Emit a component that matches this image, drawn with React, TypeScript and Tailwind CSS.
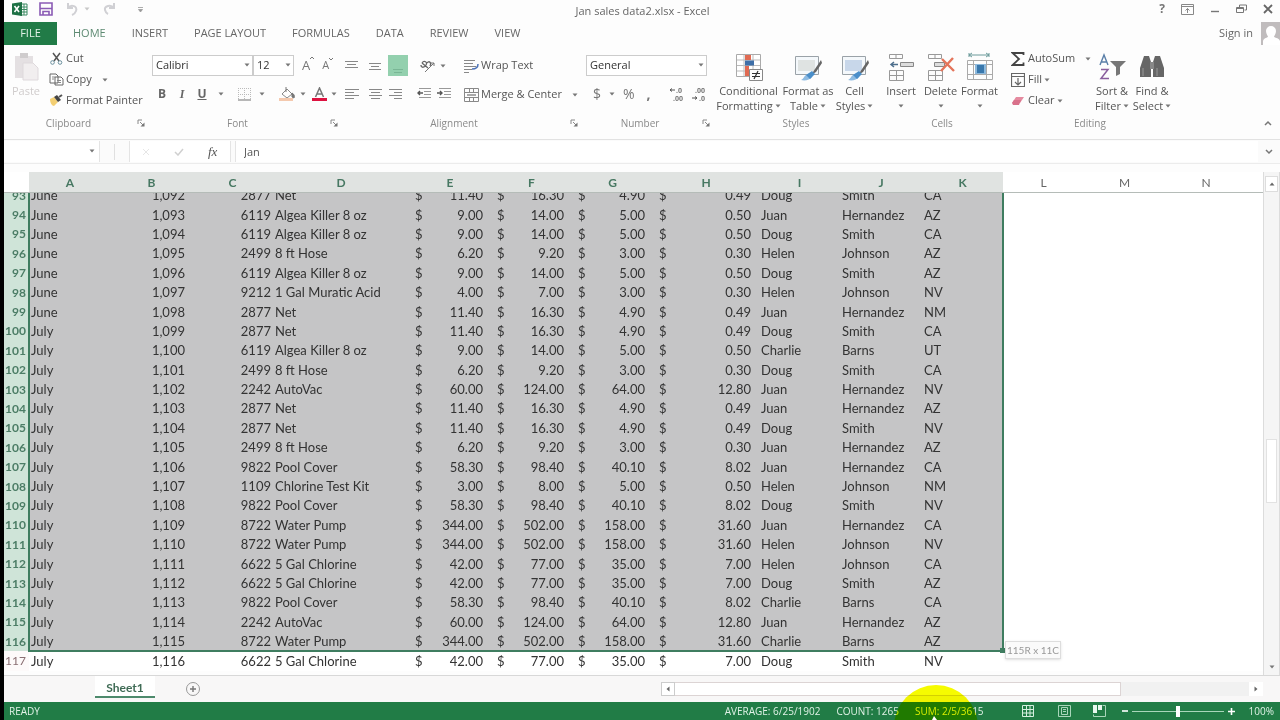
import React from "react";

type IconProps = { w: number; h: number; children: React.ReactNode };

const Icon = ({ w, h, children }: IconProps) => (
  <svg width={w} height={h} viewBox={`0 0 ${w} ${h}`} fill="none" className="shrink-0" aria-hidden="true">
    {children}
  </svg>
);

const Caret = () => (
  <Icon w={6} h={4}>
    <path d="M0.5 0.5h5L3 3.5z" fill="#777" />
  </Icon>
);

const Launcher = () => (
  <Icon w={8} h={8}>
    <path d="M1 5V1h4M3 3l3 3" stroke="#888" />
    <path d="M7.5 3.5v4h-4z" fill="#777" />
  </Icon>
);

type GroupProps = { label: string; width: string; launcher?: boolean; children: React.ReactNode };

const Group = ({ label, width, launcher, children }: GroupProps) => (
  <section aria-label={label} className={`flex shrink-0 flex-col ${width}`}>
    <div className="flex h-[67px] items-start">{children}</div>
    <div className="flex h-4 items-center px-1">
      <span className={`flex-1 text-center text-[10px] leading-4 text-[#8a8a8a] ${launcher ? "pr-2" : ""}`}>{label}</span>
      {launcher && (
        <button aria-label={`${label} settings`}>
          <Launcher />
        </button>
      )}
    </div>
  </section>
);

type SmallProps = { icon: React.ReactNode; label: string; caret?: boolean; wide?: boolean };

const SmallButton = ({ icon, label, caret, wide }: SmallProps) => (
  <button className="flex h-[21px] items-center gap-[2px] whitespace-nowrap text-[11px] text-[#555]">
    <span className="flex w-4 justify-center">{icon}</span>
    <span>{label}</span>
    {caret && (
      <span className={wide ? "ml-2" : ""}>
        <Caret />
      </span>
    )}
  </button>
);

type BigProps = { icon: React.ReactNode; lines: [string, string]; width: string };

const BigButton = ({ icon, lines, width }: BigProps) => (
  <button className={`flex flex-col items-center pt-[3px] text-[11px] leading-[15px] whitespace-nowrap text-[#555] ${width}`}>
    <span className="flex h-8 items-center">{icon}</span>
    <span>{lines[0]}</span>
    <span className="flex h-[15px] items-center gap-[2px]">
      {lines[1]}
      <Caret />
    </span>
  </button>
);

const Align = ({ rows, y, step }: { rows: [number, number][]; y: number; step: number }) => (
  <Icon w={16} h={16}>
    {rows.map(([a, b], i) => (
      <path key={i} d={`M${a} ${y + i * step + 0.5}H${b}`} stroke="#888" />
    ))}
  </Icon>
);

const Indent = ({ flip }: { flip?: boolean }) => (
  <Icon w={16} h={14}>
    <path d="M3 1.5h12M8 4.5h7M8 7.5h7M3 10.5h12" stroke="#999" />
    <path d={flip ? "M1 6h5M4 4l2 2-2 2" : "M7 6H2M4 4L2 6l2 2"} stroke="#555" strokeWidth="1.4" />
  </Icon>
);

const Decimal = ({ top, bottom, flip }: { top: string; bottom: string; flip?: boolean }) => (
  <svg width="16" height="16" viewBox="0 0 16 16" aria-hidden="true" className="font-['Open_Sans',sans-serif]">
    <text x={flip ? 4 : 7} y="7" fontSize="7" fontWeight="700" fill="#777">{top}</text>
    <text x={flip ? 8 : 4} y="15" fontSize="7" fontWeight="700" fill="#777">{bottom}</text>
    <path d={flip ? "M1 12h5M4 10.5l2 1.5-2 1.5" : "M6 4H1M3 2.5L1 4l2 1.5"} stroke="#555" fill="none" />
  </svg>
);

const TableBrush = ({ inner }: { inner: string }) => (
  <Icon w={30} h={30}>
    <path d="M2.5 4.5h23v18h-23z" fill="#f4f8fb" stroke="#9aa2a8" />
    <path d="M5 8h17v11H5z" fill={inner} />
    <path d="M28 8l-6 9-4 6 5-3 6-9z" fill="#666" />
    <path d="M8 28c3-1 3-5 7-6 3-1 5 1 4 3-2 3-7 4-11 3z" fill="#8dbbe2" />
    <path d="M13 23l4 4 5-5-3-3z" fill="#4a8ec9" />
  </Icon>
);

const menuTabs = ["HOME", "INSERT", "PAGE LAYOUT", "FORMULAS", "DATA", "REVIEW", "VIEW"];

const colWidths = [
  "w-[25px]", "w-[82px]", "w-[81px]", "w-[81px]", "w-[136px]", "w-[82px]", "w-[81px]", "w-[81px]",
  "w-[106px]", "w-[81px]", "w-[82px]", "w-[81px]", "w-[81px]", "w-[81px]", "w-[82px]", "",
];
const letters = ["A", "B", "C", "D", "E", "F", "G", "H", "I", "J", "K", "L", "M", "N"];

type Item = { code: string; name: string; cost: string; price: string; margin: string; fee: string };

const items: Record<string, Item> = {
  net: { code: "2877", name: "Net", cost: "11.40", price: "16.30", margin: "4.90", fee: "0.49" },
  algea: { code: "6119", name: "Algea Killer 8 oz", cost: "9.00", price: "14.00", margin: "5.00", fee: "0.50" },
  hose: { code: "2499", name: "8 ft Hose", cost: "6.20", price: "9.20", margin: "3.00", fee: "0.30" },
  acid: { code: "9212", name: "1 Gal Muratic Acid", cost: "4.00", price: "7.00", margin: "3.00", fee: "0.30" },
  vac: { code: "2242", name: "AutoVac", cost: "60.00", price: "124.00", margin: "64.00", fee: "12.80" },
  cover: { code: "9822", name: "Pool Cover", cost: "58.30", price: "98.40", margin: "40.10", fee: "8.02" },
  kit: { code: "1109", name: "Chlorine Test Kit", cost: "3.00", price: "8.00", margin: "5.00", fee: "0.50" },
  pump: { code: "8722", name: "Water Pump", cost: "344.00", price: "502.00", margin: "158.00", fee: "31.60" },
  chlorine: { code: "6622", name: "5 Gal Chlorine", cost: "42.00", price: "77.00", margin: "35.00", fee: "7.00" },
};

const surnames: Record<string, string> = {
  Doug: "Smith", Juan: "Hernandez", Helen: "Johnson", Charlie: "Barns",
};

const sales: [string, string, string][] = [
  ["net", "Doug", "CA"], ["algea", "Juan", "AZ"], ["algea", "Doug", "CA"], ["hose", "Helen", "AZ"],
  ["algea", "Doug", "AZ"], ["acid", "Helen", "NV"], ["net", "Juan", "NM"], ["net", "Doug", "CA"],
  ["algea", "Charlie", "UT"], ["hose", "Doug", "CA"], ["vac", "Juan", "NV"], ["net", "Juan", "AZ"],
  ["net", "Doug", "NV"], ["hose", "Juan", "AZ"], ["cover", "Juan", "CA"], ["kit", "Helen", "NM"],
  ["cover", "Doug", "NV"], ["pump", "Juan", "CA"], ["pump", "Helen", "NV"], ["chlorine", "Helen", "CA"],
  ["chlorine", "Doug", "AZ"], ["cover", "Charlie", "CA"], ["vac", "Juan", "AZ"], ["pump", "Charlie", "AZ"],
  ["chlorine", "Doug", "NV"],
];

const firstRow = 93;
const lastSelected = 116;

const Columns = () => (
  <colgroup>
    {colWidths.map((w, i) => (
      <col key={i} className={w} />
    ))}
  </colgroup>
);

const Money = ({ value }: { value: string }) => (
  <td className="pr-2 pl-[6px]">
    <div className="flex justify-between">
      <span>$</span>
      <span>{value}</span>
    </div>
  </td>
);

const SheetRow = ({ index }: { index: number }) => {
  const [key, first, state] = sales[index];
  const item = items[key];
  const num = firstRow + index;
  const selected = num <= lastSelected;
  return (
    <tr className={selected ? "bg-[#c5c5c6]" : "bg-white"}>
      <th
        scope="row"
        className={`pr-[3px] text-right text-xs ${
          selected ? "bg-[#cfe4d8] font-bold text-[#4c7d66]" : "bg-[#fdfafa] font-normal text-[#8a6f73]"
        }`}
      >
        {num}
      </th>
      <td className="pl-[2px]">{num < 100 ? "June" : "July"}</td>
      <td className="pr-[7px] text-right">{`1,${String(num + 999).slice(1)}`}</td>
      <td className="pr-[2px] text-right">{item.code}</td>
      <td className="pl-[2px]">{item.name}</td>
      <Money value={item.cost} />
      <Money value={item.price} />
      <Money value={item.margin} />
      <Money value={item.fee} />
      <td className="pl-[2px]">{first}</td>
      <td className="pl-[2px]">{surnames[first]}</td>
      <td className="pl-[2px]">{state}</td>
      <td colSpan={4} className="bg-white" />
    </tr>
  );
};

const TitleBar = () => (
  <header className="flex h-[22px] shrink-0 items-center justify-between">
    <div className="flex flex-1 items-center pb-1 pl-2">
      <Icon w={16} h={16}>
        <path d="M8 3h7v11H8z" fill="#fff" stroke="#3a8a62" />
        <path d="M9 6h6M9 8.5h6M9 11h6M12 3v11" stroke="#3a8a62" />
        <path d="M0 2.500L10 1v14L0 13.500z" fill="#1e7145" />
        <path d="M2.500 5l4.500 6M7 5l-4.500 6" stroke="#fff" strokeWidth="1.6" />
      </Icon>
      <button aria-label="Save" className="ml-[11px]">
        <Icon w={14} h={14}>
          <path d="M1 1h12v12H1z" stroke="#8a5bb5" strokeWidth="1.6" />
          <path d="M1 6.5h12M4 13V9.5h6V13" stroke="#8a5bb5" strokeWidth="1.6" />
        </Icon>
      </button>
      <button aria-label="Undo" className="ml-[13px]">
        <Icon w={14} h={14}>
          <path d="M2 1v5h5M2 6c3-4 10-2 8 3-.5 1.500-1.500 3-4 4" stroke="#d0d0d4" strokeWidth="2" />
        </Icon>
      </button>
      <span className="ml-1 opacity-40"><Caret /></span>
      <button aria-label="Redo" className="ml-3">
        <Icon w={14} h={14}>
          <path d="M12 1v5H7M12 6C9 2 2 4 3 8c.5 2 1 3 3 4" stroke="#d0d0d4" strokeWidth="2" />
        </Icon>
      </button>
      <button aria-label="Customize toolbar" className="ml-[21px]">
        <Icon w={7} h={7}>
          <path d="M1 1.500h5M1.500 3.500h4L3.500 6z" stroke="#999" fill="#999" strokeWidth=".8" />
        </Icon>
      </button>
    </div>
    <h1 className="text-[11px] text-[#666]">Jan sales data2.xlsx - Excel</h1>
    <div className="flex flex-1 items-center justify-end gap-4 pr-[7px] pb-1">
      <button aria-label="Help" className="text-xs font-bold text-[#777]">?</button>
      <button aria-label="Ribbon display options">
        <Icon w={13} h={11}>
          <path d="M.5.5h12v10H.5zM.5 2.5h12M6.500 9V4.500M4.500 6.500l2-2 2 2" stroke="#888" />
        </Icon>
      </button>
      <button aria-label="Minimize">
        <Icon w={10} h={10}>
          <path d="M1 7.500h8" stroke="#777" strokeWidth="1.4" />
        </Icon>
      </button>
      <button aria-label="Restore">
        <Icon w={11} h={10}>
          <path d="M3.500 3V1h7v5h-2M.5 3.500h7v5h-7zM.5 4.500h7" stroke="#777" />
        </Icon>
      </button>
      <button aria-label="Close">
        <Icon w={10} h={10}>
          <path d="M1 1l8 8M9 1L1 9" stroke="#666" strokeWidth="1.8" />
        </Icon>
      </button>
    </div>
  </header>
);

const MenuBar = () => (
  <nav className="flex h-[23px] shrink-0 items-center text-[11px] text-[#666]">
    <button className="h-[23px] w-[53px] bg-[#217b47] text-[#e3f2e8]">FILE</button>
    <div className="flex flex-1 gap-[26px] pl-4 whitespace-nowrap">
      {menuTabs.map((t) => (
        <button key={t} className={t === "HOME" ? "text-[#5d8a72]" : ""}>{t}</button>
      ))}
    </div>
    <a href="#signin">Sign in</a>
    <span className="ml-2">
      <Icon w={19} h={23}>
        <path d="M0 0h19v23H0z" fill="#c0bcbd" />
        <path d="M5 9a5 5 0 0110 0c0 3-2 5-2 6 2 1 5 1 6 4v4H2v-4c1-3 3-3 5-4 0-1-2-3-2-6z" fill="#fff" />
      </Icon>
    </span>
  </nav>
);

const boxClass = "h-[21px] appearance-none border border-[#ccc] bg-white pl-[3px] text-[11px] text-[#333]";

const Box = ({ label, value, width }: { label: string; value: string; width: string }) => (
  <span className="relative flex">
    <select aria-label={label} className={`${boxClass} ${width}`}>
      <option>{value}</option>
    </select>
    <span className="pointer-events-none absolute top-2 right-[3px]"><Caret /></span>
  </span>
);

const Ribbon = () => (
  <div className="flex h-[95px] shrink-0 items-start overflow-hidden border-b border-[#e2e2e2] pt-[3px]">
    <Group label="Clipboard" width="w-[145px]" launcher>
      <button className="flex w-11 flex-col items-center pt-[3px] text-[11px] leading-[15px] text-[#d0cccc]">
        <span className="flex h-8 items-center">
          <Icon w={28} h={30}>
            <path d="M3 4h18v22H3z" fill="#e4e0e2" />
            <path d="M8 1h8v5H8z" fill="#cfcccd" />
            <path d="M11 11h10l5 5v12H11z" fill="#f1eeef" stroke="#ded9dc" />
          </Icon>
        </span>
        <span>Paste</span>
      </button>
      <div className="flex flex-col">
        <SmallButton
          label="Cut"
          icon={
            <Icon w={13} h={13}>
              <path d="M3 1l6 8M10 1L4 9" stroke="#555" strokeWidth="1.5" />
              <circle cx="2.5" cy="10.5" r="1.8" stroke="#6a8f9d" />
              <circle cx="10" cy="10.5" r="1.8" stroke="#6a8f9d" />
            </Icon>
          }
        />
        <SmallButton
          label="Copy"
          caret
          wide
          icon={
            <Icon w={15} h={13}>
              <path d="M1 1h6l2 2v7H1zM6 4h6l2 2v6H6z" fill="#fff" stroke="#666" />
              <path d="M3 4h3M3 6h2M8 7.500h4M8 9.500h4" stroke="#888" />
            </Icon>
          }
        />
        <SmallButton
          label="Format Painter"
          icon={
            <Icon w={15} h={13}>
              <path d="M1 5l4-2 4 5-4 4c-2 0-4-3-4-7z" fill="#f3cf73" />
              <path d="M5 3l3-2 4 5-3 2z" fill="#444" />
              <path d="M10 3l3-2" stroke="#555" strokeWidth="2" />
            </Icon>
          }
        />
      </div>
    </Group>

    <Group label="Font" width="w-[193px]" launcher>
      <div className="flex flex-col gap-2 pt-[7px] pl-[3px]">
        <div className="flex h-[21px] items-center">
          <Box label="Font name" value="Calibri" width="w-[101px]" />
          <Box label="Font size" value="12" width="w-[41px]" />
          <button aria-label="Increase font size" className="ml-2 flex text-[13px] text-[#777]">
            A<Icon w={4} h={4}><path d="M0 3l2-2 2 2" stroke="#777" /></Icon>
          </button>
          <button aria-label="Decrease font size" className="ml-2 flex items-start text-[11px] text-[#777]">
            A<Icon w={4} h={4}><path d="M0 1l2 2 2-2" stroke="#777" /></Icon>
          </button>
        </div>
        <div className="flex h-5 items-center pl-[2px] text-xs text-[#666]">
          <button aria-label="Bold" className="w-4 font-bold">B</button>
          <button aria-label="Italic" className="ml-1 w-4 font-['Liberation_Serif',serif] font-bold italic">I</button>
          <button aria-label="Underline" className="ml-1 w-4 font-bold underline">U</button>
          <span className="ml-2"><Caret /></span>
          <button aria-label="Borders" className="ml-[14px]">
            <Icon w={13} h={13}>
              <path d="M.5 0v12M6.500 0v12M12.500 0v12M0 .5h13M0 6.500h13" stroke="#bbb" strokeDasharray="1 1" />
              <path d="M0 12h13" stroke="#999" strokeWidth="1.4" />
            </Icon>
          </button>
          <span className="ml-2"><Caret /></span>
          <button aria-label="Fill color" className="ml-[14px]">
            <Icon w={17} h={14}>
              <path d="M3 7l5-5 5 5-5 4z" fill="#fff" stroke="#888" />
              <path d="M7 5V0M13 6c2 1 3 3 2 5l-2-1z" stroke="#777" fill="#777" />
              <path d="M0 11h14v3H0z" fill="#f4c9ae" />
            </Icon>
          </button>
          <span className="ml-1"><Caret /></span>
          <button aria-label="Font color" className="ml-[6px]">
            <svg width="15" height="15" viewBox="0 0 15 15" aria-hidden="true">
              <path d="M3.500 10L7.500 1l4 9M5 7h5" stroke="#777" strokeWidth="1.5" fill="none" />
              <path d="M0 11h15v3H0z" fill="#dd1240" />
            </svg>
          </button>
          <span className="ml-1"><Caret /></span>
        </div>
      </div>
    </Group>

    <Group label="Alignment" width="w-[240px]" launcher>
      <div className="flex w-[121px] shrink-0 flex-col gap-2 pt-[7px] pl-[2px]">
        <div className="flex h-[21px] items-center gap-1">
          <button aria-label="Top align"><Align rows={[[1, 14], [3, 12], [1, 14]]} y={3} step={3} /></button>
          <button aria-label="Middle align" className="ml-1"><Align rows={[[1, 13], [3, 11], [1, 13]]} y={5} step={3} /></button>
          <button aria-label="Bottom align" className="flex h-[21px] w-5 items-end justify-center bg-[#93d0ae]">
            <Icon w={14} h={8}><path d="M2 1.500h10M3 4.500h8" stroke="#79b695" /></Icon>
          </button>
          <button aria-label="Orientation" className="ml-2">
            <Icon w={16} h={14}>
              <path d="M2 4l6 5M2 4c2-3 6-1 4 2s-5 3-5 0M7 4c2-3 5 0 3 3" stroke="#666" strokeWidth="1.3" />
              <path d="M5 13l9-9M14 4h-3M14 4v3" stroke="#777" />
            </Icon>
          </button>
          <Caret />
        </div>
        <div className="flex h-5 items-center gap-1">
          <button aria-label="Align left"><Align rows={[[1, 15], [1, 10], [1, 15], [1, 10]]} y={3} step={3} /></button>
          <button aria-label="Center" className="ml-1"><Align rows={[[1, 14], [3, 12], [1, 14], [3, 12]]} y={3} step={3} /></button>
          <button aria-label="Align right"><Align rows={[[1, 14], [6, 14], [1, 14], [6, 14]]} y={3} step={3} /></button>
          <button aria-label="Decrease indent" className="ml-2"><Indent /></button>
          <button aria-label="Increase indent"><Indent flip /></button>
        </div>
      </div>
      <div className="flex flex-col gap-2 pt-[7px]">
        <SmallButton
          label="Wrap Text"
          icon={
            <Icon w={15} h={14}>
              <path d="M0 1.500h11M0 4.500h9M0 7.500h12M0 10.500h8M0 13.500h5" stroke="#888" />
              <path d="M14 5c0 4-2 5-6 5" stroke="#4f74b8" strokeWidth="1.5" />
            </Icon>
          }
        />
        <SmallButton
          label="Merge & Center"
          caret
          wide
          icon={
            <Icon w={15} h={14}>
              <path d="M.5.5h14v13H.5zM.5 4.500h14M.5 9.500h14M5.500.5v4M9.500.5v4M5.500 9.500v4M9.500 9.500v4" stroke="#888" />
              <path d="M3 7h9" stroke="#555" />
            </Icon>
          }
        />
      </div>
    </Group>

    <Group label="Number" width="w-[132px]" launcher>
      <div className="flex flex-col gap-2 pt-[7px] pl-1">
        <Box label="Number format" value="General" width="w-[121px]" />
        <div className="flex h-5 items-center pl-[7px] text-sm text-[#777]">
          <button aria-label="Accounting format">$</button>
          <span className="ml-2"><Caret /></span>
          <button aria-label="Percent" className="ml-2">%</button>
          <button aria-label="Comma style" className="ml-3 font-bold">,</button>
          <button aria-label="Increase decimal" className="ml-[18px]"><Decimal top=".0" bottom=".00" /></button>
          <button aria-label="Decrease decimal" className="ml-[6px]"><Decimal top=".00" bottom=".0" flip /></button>
        </div>
      </div>
    </Group>

    <Group label="Styles" width="w-[164px]">
      <BigButton
        width="w-[69px]"
        lines={["Conditional", "Formatting"]}
        icon={
          <Icon w={30} h={30}>
            <path d="M2.500 2.500h24v22h-24z" fill="#fff" stroke="#aaa" />
            <path d="M3 8h23M3 13.500h23M3 19h23M10 3v21M19 3v21" stroke="#bbb" />
            <path d="M11 3h6v5h-6zM11 14h4v5h-4z" fill="#e06a52" />
            <path d="M11 8.500h9v5h-9z" fill="#3e6fa8" />
            <path d="M11 19h6v5h-6z" fill="#e06a52" />
            <path d="M15.500 17.500h13v11h-13z" fill="#fff" stroke="#888" />
            <path d="M18 21.500h8M18 24.500h8M24 19l-4 8" stroke="#333" strokeWidth="1.2" />
          </Icon>
        }
      />
      <BigButton width="w-[50px]" lines={["Format as", "Table"]} icon={<TableBrush inner="#dfe3e2" />} />
      <BigButton width="w-[43px]" lines={["Cell", "Styles"]} icon={<TableBrush inner="#c8d7ea" />} />
    </Group>

    <Group label="Cells" width="w-[128px]">
      <div className="flex pl-[3px]">
        <BigButton
          width="w-[40px]"
          lines={["Insert", ""]}
          icon={
            <Icon w={28} h={30}>
              <path d="M2.500 2.500h13v4h-13zM9 2v4M2.500 18.500h14v10h-14zM2 23.500h14M9.500 18v10" stroke="#999" />
              <path d="M13.500 10.500h13v4h-13z" fill="#ddd" stroke="#888" />
              <path d="M11 12.500H4M7 10l-3 2.500L7 15" stroke="#4e6f8d" strokeWidth="1.5" />
            </Icon>
          }
        />
        <BigButton
          width="w-[39px]"
          lines={["Delete", ""]}
          icon={
            <Icon w={30} h={30}>
              <path d="M2.500 2.500h13v4h-13zM9 2v4M2.500 18.500h14v10h-14zM2 23.500h14M9.500 18v10" stroke="#999" />
              <path d="M8.500 10.500h10v4h-10z" fill="#ddd" stroke="#888" />
              <path d="M16 7l12 12M27 6L15 19" stroke="#e4745a" strokeWidth="2.4" />
            </Icon>
          }
        />
        <BigButton
          width="w-[39px]"
          lines={["Format", ""]}
          icon={
            <Icon w={28} h={30}>
              <path d="M3 3h20M3 1v4M23 1v4M6 1L3 3l3 2M20 1l3 2-3 2" stroke="#6b9a9a" />
              <path d="M1.500 8.500h25v19h-25zM1 12.500h25M1 22.500h25M7.500 8v19M20.500 8v19" stroke="#aaa" />
              <path d="M9 12h11v10H9z" fill="#8db9dc" />
              <path d="M11 13h7v8h-7z" fill="#3978ad" />
            </Icon>
          }
        />
      </div>
    </Group>

    <Group label="Editing" width="w-[168px]">
      <div className="flex w-[86px] shrink-0 flex-col pl-1">
        <SmallButton
          label="AutoSum"
          caret
          wide
          icon={
            <Icon w={14} h={14}>
              <path d="M12.500 3V1H1.500L8 7l-6.500 6h11v-2.500" stroke="#444" strokeWidth="1.8" />
            </Icon>
          }
        />
        <SmallButton
          label="Fill"
          caret
          icon={
            <Icon w={14} h={14}>
              <path d="M.5.5h13v13H.5zM.5 3.500h13M7 5v7M4 9l3 3 3-3" stroke="#666" strokeWidth="1.2" />
            </Icon>
          }
        />
        <SmallButton
          label="Clear"
          caret
          icon={
            <Icon w={14} h={11}>
              <path d="M5 2h8l-4 6H1z" fill="#e58ba0" />
              <path d="M1 8l2-3h7l-2 5H2z" fill="#d9718b" />
            </Icon>
          }
        />
      </div>
      <BigButton
        width="w-[40px]"
        lines={["Sort &", "Filter"]}
        icon={
          <Icon w={30} h={30}>
            <path d="M3 13L7 3l4 10M4.500 10h5" stroke="#5a7fa8" strokeWidth="1.4" />
            <path d="M4 17.500h7L4 26.500h8" stroke="#8a5f9e" strokeWidth="1.5" />
            <path d="M13 9h16l-6 6v7l-4 2v-9z" fill="#777" />
          </Icon>
        }
      />
      <BigButton
        width="w-[40px]"
        lines={["Find &", "Select"]}
        icon={
          <Icon w={28} h={28}>
            <path d="M6 3h5l2 6v15H2V15zM17 3h5l4 12v9H15V9z" fill="#666" />
            <path d="M12 9h4v7h-4z" fill="#888" />
            <path d="M5 15v8M19 15v8" stroke="#999" />
          </Icon>
        }
      />
    </Group>
    <div className="flex flex-1 justify-end pt-[72px] pr-2">
      <button aria-label="Collapse ribbon">
        <Icon w={8} h={6}><path d="M1 5l3-3 3 3" stroke="#777" strokeWidth="1.5" /></Icon>
      </button>
    </div>
  </div>
);

const FormulaBar = () => (
  <div className="flex h-6 shrink-0 items-center border-b border-[#ececec] bg-[#fbfbfb] text-[11px] text-[#555]">
    <div className="relative flex w-24 border-r border-[#e4e4e4]">
      <input aria-label="Name box" className="h-[21px] w-full bg-white pl-1" />
      <span className="pointer-events-none absolute top-2 right-1"><Caret /></span>
    </div>
    <span className="ml-[14px] h-4 w-px bg-[#e0e0e0]" />
    <div className="ml-[14px] flex w-[102px] items-center border-x border-[#e4e4e4] bg-white pl-3">
      <button aria-label="Cancel"><Icon w={8} h={8}><path d="M1 1l6 6M7 1L1 7" stroke="#e6e6e6" /></Icon></button>
      <button aria-label="Enter" className="ml-6"><Icon w={10} h={8}><path d="M1 4l3 3 5-6" stroke="#d0d0d0" strokeWidth="1.5" /></Icon></button>
      <button aria-label="Insert function" className="ml-6 h-[21px] font-['Liberation_Serif',serif] text-[13px] italic">fx</button>
    </div>
    <input aria-label="Formula" defaultValue="Jan" className="ml-1 h-[21px] min-w-0 flex-1 border-l border-[#e4e4e4] bg-white pl-2" />
    <button aria-label="Expand formula bar" className="px-[7px]">
      <Icon w={8} h={6}><path d="M1 1l3 3 3-3" stroke="#777" strokeWidth="1.5" /></Icon>
    </button>
  </div>
);

const Sheet = () => (
  <main className="flex min-h-0 flex-1 pt-2">
    <div className="flex min-w-0 flex-1 flex-col font-['Lato',sans-serif] text-[13px] text-[#333]">
      <table aria-label="Column headings" className="w-full shrink-0 table-fixed border-collapse">
        <Columns />
        <thead>
          <tr className="h-5 border-b border-[#b5bcb8] text-center text-xs">
            <td className="bg-white" />
            {letters.map((l, i) => (
              <th
                key={l}
                scope="col"
                className={`pt-[3px] ${i < 11 ? "bg-[#e0e3e1] font-bold text-[#477862]" : "bg-white font-normal text-[#666]"}`}
              >
                {l}
              </th>
            ))}
            <td className="bg-white" />
          </tr>
        </thead>
      </table>
      <div className="flex min-h-0 flex-1 flex-col justify-end overflow-hidden pb-1">
        <div className="relative">
          <table aria-label="Sales" className="h-[485px] w-full table-fixed border-collapse leading-[17px] whitespace-nowrap">
            <Columns />
            <tbody>
              {sales.map((_, i) => (
                <SheetRow key={i} index={i} />
              ))}
            </tbody>
          </table>
          <div className="pointer-events-none absolute top-0 bottom-[19px] left-6 w-[976px] border-2 border-t-0 border-[#3f7d60]">
            <div className="absolute -right-[3px] -bottom-[3px] size-[5px] bg-[#3f7d60]" />
          </div>
          <div className="absolute bottom-3 left-[1001px] border border-[#ddd] bg-[#fafafa] px-px text-[10px] leading-4 text-[#999] shadow-sm">
            115R x 11C
          </div>
        </div>
      </div>
    </div>
    <div className="flex w-[17px] shrink-0 flex-col items-center border-x border-[#dcdcdc] bg-[#f5f5f5] pt-1">
      <button aria-label="Scroll up" className="flex h-4 w-[13px] items-center justify-center border border-[#ddd] bg-white">
        <Icon w={6} h={4}><path d="M.5 3.500h5L3 .5z" fill="#666" /></Icon>
      </button>
      <div className="flex w-full flex-1 flex-col px-[2px]">
        <div className="flex-[250]" />
        <div className="flex-[62] border border-[#e2e2e2] bg-white" />
        <div className="flex-[158]" />
      </div>
      <button aria-label="Scroll down" className="flex h-4 w-[13px] items-center justify-center">
        <Caret />
      </button>
    </div>
  </main>
);

const SheetTabs = () => (
  <div className="flex h-[27px] shrink-0 items-start border-t border-[#d8d8d8] bg-[#f8f7f7] pr-[17px]">
    <button className="ml-[91px] h-[22px] w-[60px] border-b-2 border-[#4d8a6c] bg-white pt-[3px] font-['Lato',sans-serif] text-[12px] leading-4 font-bold text-[#3f6b55]">
      Sheet1
    </button>
    <button aria-label="New sheet" className="mt-[5px] ml-[30px]">
      <Icon w={16} h={16}>
        <circle cx="8" cy="8" r="6.5" stroke="#999" />
        <path d="M8 5v6M5 8h6" stroke="#777" strokeWidth="1.4" />
      </Icon>
    </button>
    <div className="flex-1" />
    <div className="mt-[6px] flex h-[14px] w-[602px]">
      <button aria-label="Scroll left" className="flex w-[14px] items-center justify-center border border-[#ccc] bg-white">
        <Icon w={4} h={6}><path d="M3.500.5v5L.5 3z" fill="#666" /></Icon>
      </button>
      <div className="w-[446px] border border-l-0 border-[#dcd4d4] bg-white" />
      <div className="flex-1 bg-[#f1f1f1]" />
      <button aria-label="Scroll right" className="flex w-[14px] items-center justify-center bg-white">
        <Icon w={4} h={6}><path d="M.5.5v5l3-2.500z" fill="#666" /></Icon>
      </button>
    </div>
  </div>
);

const StatusBar = () => (
  <footer className="relative flex h-[18px] shrink-0 items-center justify-between bg-[#217c46] pr-[6px] pl-[5px] text-[10px] leading-[18px] whitespace-nowrap text-[#e0f2e6]">
    <span>READY</span>
    <div className="flex items-center">
      <div className="flex gap-4">
        <span>AVERAGE: 6/25/1902</span>
        <span>COUNT: 1265</span>
        <span>SUM: 2/5/3615</span>
      </div>
      <button aria-label="Normal view" className="ml-[38px]">
        <Icon w={12} h={12}><path d="M.5.5h11v11H.5zM4.500 0v12M8 0v12M0 4.500h12M0 8h12" stroke="#d5efdf" /></Icon>
      </button>
      <button aria-label="Page layout view" className="ml-6">
        <Icon w={13} h={12}><path d="M.5.5h12v11H.5zM3.500 2.500h6v7h-6zM5 4.500h3M5 6.500h3" stroke="#a9d6ba" /></Icon>
      </button>
      <button aria-label="Page break view" className="ml-[22px]">
        <Icon w={13} h={12}>
          <path d="M0 0h4v8H0zM5 0h4v5H5z" fill="#e8f7ee" />
          <path d="M9.500.5h3v11H.5v-2" stroke="#a9d6ba" />
        </Icon>
      </button>
      <button aria-label="Zoom out" className="ml-4">
        <Icon w={6} h={6}><path d="M0 3h6" stroke="#fff" strokeWidth="1.6" /></Icon>
      </button>
      <input
        type="range"
        aria-label="Zoom"
        defaultValue={50}
        className="mx-1 h-3 w-[92px] appearance-none bg-transparent [&::-webkit-slider-runnable-track]:h-px [&::-webkit-slider-runnable-track]:bg-[#a9d6ba] [&::-webkit-slider-thumb]:-mt-[5px] [&::-webkit-slider-thumb]:h-[11px] [&::-webkit-slider-thumb]:w-1 [&::-webkit-slider-thumb]:appearance-none [&::-webkit-slider-thumb]:bg-white"
      />
      <button aria-label="Zoom in">
        <Icon w={7} h={7}><path d="M0 3.500h7M3.500 0v7" stroke="#fff" strokeWidth="1.6" /></Icon>
      </button>
      <span className="ml-[14px]">100%</span>
    </div>
    <div className="pointer-events-none absolute right-[302px] bottom-0 h-[35px] w-[84px] overflow-hidden mix-blend-multiply">
      <div className="size-[84px] rounded-full bg-[#f6fb00]" />
    </div>
    <span className="pointer-events-none absolute right-[343px] bottom-0 flex">
      <Icon w={5} h={4}><path d="M0 4l2-4 3 4z" fill="#fff" /></Icon>
    </span>
  </footer>
);

export default function App() {
  return (
    <div className="flex h-screen flex-col overflow-hidden border-l-4 border-black bg-[#fdfdfd] font-['Open_Sans',sans-serif]">
      <TitleBar />
      <MenuBar />
      <Ribbon />
      <FormulaBar />
      <Sheet />
      <SheetTabs />
      <StatusBar />
    </div>
  );
}
